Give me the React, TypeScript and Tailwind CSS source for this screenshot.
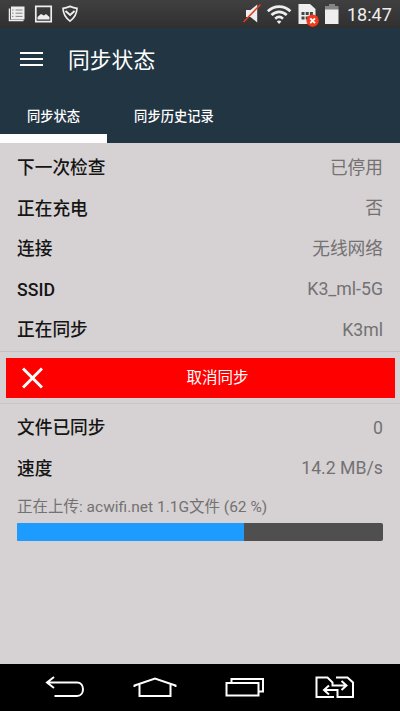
import type { ReactNode } from "react";

type RowProps = {
  label: string;
  value: string;
};

const connectionRows: RowProps[] = [
  { label: "下一次检查", value: "已停用" },
  { label: "正在充电", value: "否" },
  { label: "连接", value: "无线网络" },
  { label: "SSID", value: "K3_ml-5G" },
  { label: "正在同步", value: "K3ml" },
];

const transferRows: RowProps[] = [
  { label: "文件已同步", value: "0" },
  { label: "速度", value: "14.2 MB/s" },
];

const progress = 62;

function Row({ label, value }: RowProps) {
  return (
    <div className="flex h-[40.5px] items-center justify-between text-[17.7px] whitespace-nowrap">
      <span className="pt-px font-medium text-[#151515]">{label}</span>
      <span className="text-[#737172]">{value}</span>
    </div>
  );
}

function StatusBar() {
  return (
    <div className="flex h-7 shrink-0 items-center bg-linear-to-b from-[#404040] to-[#303030] text-[#eee]">
      <svg width="230" height="28" fill="none" stroke="currentColor">
        {/* news feed */}
        <path d="M11 6.5h13.5v13H11z" fill="currentColor" stroke="none" />
        <path d="M9.5 8.5v12h14" strokeWidth="1.5" />
        <path d="M15.5 10h7M15.5 13.2h7M15.5 16.4h7M12 10h1.5M12 13.2h1.5M12 16.4h1.5" stroke="#777" strokeWidth="0.9" />
        {/* picture */}
        <path d="M35.8 6.3h15.4v15.4H35.8z" strokeWidth="1.7" />
        <path d="M37.5 19.5V17l3.5-3 3 1.5 2-1.5 3.5 3v2.5z" fill="currentColor" stroke="none" />
        {/* shield */}
        <path
          d="M70 6.4c-2.5 1-4.8 1.6-7 1.9.2 5.8 2.5 9.6 7 12.8 4.5-3.2 6.8-7 7-12.8-2.2-.3-4.5-.9-7-1.9z"
          strokeWidth="1.7"
        />
        <path d="M65.5 11l4.6 4 4.5-4" strokeWidth="2" />
      </svg>
      <svg width="115" height="28" viewBox="230 0 115 28" fill="none" stroke="currentColor">
        {/* muted speaker */}
        <path d="M246 10h4.5l6.7-5.5v18L250.5 17H246z" fill="currentColor" stroke="none" />
        <path d="M243.5 22L260.5 4.500" stroke="#e43c22" strokeWidth="1.5" />
        {/* wifi */}
        <path
          d="M267.8 11.3c6.7-6.2 16.1-6.2 22.6 0M271.5 15c4.6-4.3 10.800-4.300 15.200 0M275.200 18.700c2.500-2.200 5.400-2.200 7.800 0"
          strokeWidth="2.7"
        />
        <path d="M276.8 21.5l2.3 2.5 2.3-2.5c-1.5-1.2-3.1-1.2-4.6 0z" fill="currentColor" stroke="none" />
        {/* sim card */}
        <path d="M298.5 4H310l5.5 5v15h-17z" fill="currentColor" stroke="none" />
        <path
          d="M301.5 12h3v3h-3zm4.2 0h3v3h-3zm4.2 0h3v3h-3zM301.5 16.5h3v3h-3zm4.2 0h3v3h-3z"
          fill="#444"
          stroke="none"
        />
        <circle cx="312.6" cy="20.7" r="6.2" fill="#f13a1d" stroke="none" />
        <path d="M310.2 18.3l4.8 4.8m0-4.8l-4.8 4.8" stroke="#fff" strokeWidth="1.9" />
        {/* battery */}
        <path d="M329 4h6v2h3.500v4H325V6h4z" fill="#858585" stroke="none" />
        <path d="M325 9.500h13.500V24H325z" fill="currentColor" stroke="none" />
      </svg>
      <span className="ml-0.5 text-[18px] whitespace-nowrap">18:47</span>
    </div>
  );
}

function NavButton({ label, children }: { label: string; children: ReactNode }) {
  return (
    <button aria-label={label} className="flex h-full w-[90px] items-center justify-center">
      <svg width="46" height="30" viewBox="0 0 46 30" fill="none" stroke="#fff" strokeWidth="2">
        {children}
      </svg>
    </button>
  );
}

export default function App() {
  return (
    <div className="flex h-[711px] w-[400px] flex-col overflow-hidden bg-[#d6d2d3] font-[Roboto,'Noto_Sans_CJK_SC',sans-serif]">
      <StatusBar />

      <header className="h-[115px] shrink-0 bg-[#223543] text-white">
        <div className="flex h-[62px] items-center pl-5">
          <button aria-label="菜单" className="flex w-[23px] flex-col gap-[3.5px]">
            <span className="h-[2.5px] w-full bg-white" />
            <span className="h-[2.5px] w-full bg-white" />
            <span className="h-[2.5px] w-full bg-white" />
          </button>
          <h1 className="ml-[25px] pt-1 text-[21.8px] whitespace-nowrap">同步状态</h1>
        </div>
        <nav className="flex h-[53px] text-[13.3px] font-medium whitespace-nowrap">
          <button className="flex w-[107px] items-center justify-center border-b-[9px] border-white pt-2.5">
            同步状态
          </button>
          <button className="flex w-[134px] items-center justify-center pt-px">同步历史记录</button>
        </nav>
      </header>

      <main className="flex-1">
        <section className="h-[209px] border-b border-[#c5c1c2] px-[17px] pt-[5px]">
          {connectionRows.map((row) => (
            <Row key={row.label} {...row} />
          ))}
        </section>

        <div className="h-[52px] border-b border-[#c9c5c6] px-[5.5px] pt-[5.5px]">
          <button className="flex h-10 w-full items-center bg-[#ff0000] pl-4 text-white">
            <svg width="21" height="22" viewBox="0 0 21 22" stroke="currentColor" strokeWidth="3">
              <path d="M1 1.5l19 19m0-19l-19 19" />
            </svg>
            <span className="ml-36 pt-0.5 text-[15.5px]">取消同步</span>
          </button>
        </div>

        <section className="px-[17px] pt-1">
          {transferRows.map((row) => (
            <Row key={row.label} {...row} />
          ))}
          <p className="mt-[7px] h-[27px] text-[15.5px] leading-[22px] whitespace-nowrap text-[#737172]">
            正在上传: acwifi.net 1.1G文件 ({progress} %)
          </p>
          <div className="h-[18px] overflow-hidden rounded-xs bg-[#4f4f4f]">
            <div className="h-full bg-[#1d9bff]" style={{ width: `${progress}%` }} />
          </div>
        </section>
      </main>

      <footer className="flex h-[47px] shrink-0 items-center bg-black pl-5">
        <NavButton label="返回">
          <path d="M12 4L5 9.5l7 5.500M5 9.500h30c8 0 8 13.500 0 13.500H12.500" />
        </NavButton>
        <NavButton label="主页">
          <path d="M2.5 14v-1.5L23 5.5l20.5 7V14M7.5 11.5V23h31V11.5" />
        </NavButton>
        <NavButton label="最近任务">
          <path d="M4.5 10h32v12.5h-32zM9.5 10V6H41v12.5h-4" />
        </NavButton>
        <NavButton label="切换">
          <path d="M22 24H4.5V4.5h11l5 5v3H34M29.500 8l5 4.500-5 4.500M24 4.500h11.500l5.500 5V24H25.500v-7H12m5-4.500L12 17l5 4.500" />
        </NavButton>
      </footer>
    </div>
  );
}
